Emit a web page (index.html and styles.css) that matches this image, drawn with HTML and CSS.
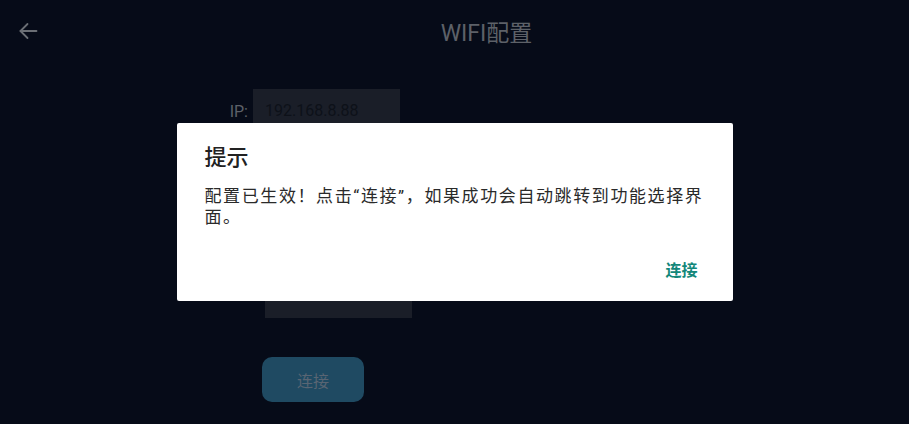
FILE: index.html
```html
<!DOCTYPE html>
<html lang="zh-CN">
<head>
  <meta charset="UTF-8">
  <meta name="viewport" content="width=device-width, initial-scale=1.0">
  <title>WIFI配置</title>
  <link rel="stylesheet" href="styles.css">
</head>
<body>
  <div class="app">
    <header class="topbar">
      <button class="back" aria-label="返回">
        <svg width="24" height="24" viewBox="0 0 24 24" fill="none" stroke="currentColor" stroke-width="1.8" stroke-linecap="round" stroke-linejoin="round">
          <path d="M20.5 12H4.5"/>
          <path d="M11.5 5l-7 7 7 7"/>
        </svg>
      </button>
      <h1 class="title">WIFI配置</h1>
    </header>

    <form class="form">
      <div class="row row-ip">
        <label class="label">IP:</label>
        <div class="field">192.168.8.88</div>
      </div>
      <div class="row row-pass">
        <label class="label">密码:</label>
        <div class="field"></div>
      </div>
      <div class="row row-btn">
        <button type="button" class="connect">连接</button>
      </div>
    </form>
  </div>

  <!-- dialog over the dimmed page -->
  <div class="scrim">
    <div class="dialog">
      <h2 class="dialog-title">提示</h2>
      <p class="dialog-text">配置已生效！点击“连接”，如果成功会自动跳转到功能选择界面。</p>
      <div class="dialog-actions">
        <button class="dialog-btn">连接</button>
      </div>
    </div>
  </div>
</body>
</html>
```

FILE: styles.css
```css
html, body {
  margin: 0;
  padding: 0;
  height: 100%;
  overflow: hidden;
  background: #060b18;
  font-family: Roboto, "Noto Sans CJK SC", sans-serif;
}

.app {
  height: 100%;
}

.topbar {
  display: flex;
  align-items: center;
  height: 62px;
}

.back {
  width: 56px;
  height: 62px;
  display: flex;
  align-items: center;
  padding: 0 0 0 16px;
  border: 0;
  background: none;
  color: #6b6f75;
}

.title {
  flex: 1;
  margin: 0;
  padding-left: 8px;
  text-align: center;
  font-size: 23px;
  font-weight: 400;
  color: #5d6168;
}

.form {
  display: flex;
  flex-direction: column;
  padding-top: 27px;
}

.row {
  display: flex;
  align-items: center;
}

.label {
  font-size: 16px;
  color: #5d6168;
  text-align: right;
}

.field {
  width: 135px;
  height: 44px;
  padding-left: 12px;
  background: #1a1e28;
  color: #0d1119;
  font-size: 16px;
  line-height: 44px;
}

.row-ip .label {
  width: 248px;
  margin-right: 5px;
}

.row-pass {
  margin-top: 141px;
}

.row-pass .label {
  width: 258px;
  margin-right: 7px;
  color: transparent;
}

.row-btn {
  margin-top: 39px;
  padding-left: 262px;
}

.connect {
  width: 102px;
  height: 45px;
  border: 0;
  border-radius: 10px;
  background: #1f4a62;
  color: #596573;
  font-family: inherit;
  font-size: 16px;
}

.scrim {
  position: fixed;
  inset: 0;
  display: flex;
  align-items: center;
  justify-content: center;
}

.dialog {
  width: 556px;
  height: 178px;
  box-sizing: border-box;
  padding: 20px 20px 19px 28px;
  background: #fff;
  border-radius: 2px;
}

.dialog-title {
  margin: 0;
  font-size: 22px;
  font-weight: 500;
  line-height: 30px;
  color: #222;
}

.dialog-text {
  margin: 13px 0 0;
  font-size: 17px;
  line-height: 21px;
  letter-spacing: 1.6px;
  color: #2a2a2a;
}

.dialog-actions {
  display: flex;
  justify-content: flex-end;
  margin: 31px 15px 0 0;
}

.dialog-btn {
  padding: 0;
  border: 0;
  background: none;
  font-family: inherit;
  font-size: 16px;
  font-weight: 700;
  line-height: 24px;
  color: #13877a;
}
```
